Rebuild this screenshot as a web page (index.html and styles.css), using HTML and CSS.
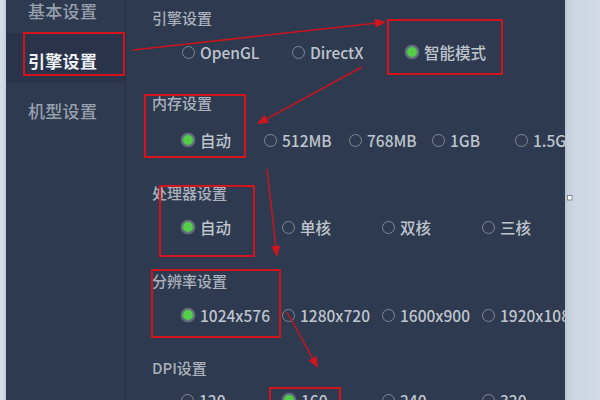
FILE: index.html
```html
<!DOCTYPE html>
<html lang="zh-CN">
<head>
<meta charset="utf-8">
<title>引擎设置</title>
<link rel="stylesheet" href="styles.css">
</head>
<body>
<div class="frame">
  <div class="edge-left"></div>
  <nav class="sidebar">
    <ul class="menu">
      <li class="menu-item">基本设置</li>
      <li class="menu-item active">引擎设置</li>
      <li class="menu-item">机型设置</li>
    </ul>
  </nav>
  <main class="panel">
    <section class="sec sec-engine">
      <div class="sec-title">引擎设置</div>
      <div class="row row-engine">
        <label class="opt w110"><span class="radio"></span>OpenGL</label>
        <label class="opt w113"><span class="radio"></span>DirectX</label>
        <label class="opt"><span class="radio on"></span>智能模式</label>
      </div>
    </section>
    <section class="sec sec-mem">
      <div class="sec-title">内存设置</div>
      <div class="row">
        <label class="opt w83"><span class="radio on"></span>自动</label>
        <label class="opt w85"><span class="radio"></span>512MB</label>
        <label class="opt w83"><span class="radio"></span>768MB</label>
        <label class="opt w83"><span class="radio"></span>1GB</label>
        <label class="opt"><span class="radio"></span>1.5GB</label>
      </div>
    </section>
    <section class="sec sec-cpu">
      <div class="sec-title">处理器设置</div>
      <div class="row">
        <label class="opt w101"><span class="radio on"></span>自动</label>
        <label class="opt w100"><span class="radio"></span>单核</label>
        <label class="opt w100"><span class="radio"></span>双核</label>
        <label class="opt"><span class="radio"></span>三核</label>
      </div>
    </section>
    <section class="sec sec-res">
      <div class="sec-title">分辨率设置</div>
      <div class="row">
        <label class="opt w101"><span class="radio on"></span>1024x576</label>
        <label class="opt w100"><span class="radio"></span>1280x720</label>
        <label class="opt w100"><span class="radio"></span>1600x900</label>
        <label class="opt"><span class="radio"></span>1920x1080</label>
      </div>
    </section>
    <section class="sec sec-dpi">
      <div class="sec-title">DPI设置</div>
      <div class="row">
        <label class="opt w101"><span class="radio"></span>120</label>
        <label class="opt w100"><span class="radio on"></span>160</label>
        <label class="opt w100"><span class="radio"></span>240</label>
        <label class="opt"><span class="radio"></span>320</label>
      </div>
    </section>
  </main>
  <div class="edge-right"></div>

  <svg class="annot" width="600" height="400" viewBox="0 0 600 400" xmlns="http://www.w3.org/2000/svg">
    <g fill="none" stroke="#d3141c" stroke-width="2">
      <rect x="24" y="33" width="100" height="42"/>
      <rect x="388" y="20" width="114" height="54"/>
      <rect x="145" y="95" width="100" height="62"/>
      <rect x="160" y="186" width="94" height="70"/>
      <rect x="152" y="270" width="128" height="67"/>
      <rect x="270" y="388" width="70" height="24"/>
    </g>
    <g stroke="#c8141c" stroke-width="1.5" fill="none">
      <line x1="133" y1="50" x2="375" y2="23.2"/>
      <line x1="362" y1="67" x2="266.7" y2="118.8"/>
      <line x1="267" y1="169" x2="275.8" y2="246"/>
      <line x1="287" y1="312" x2="312.7" y2="358.4"/>
    </g>
    <g fill="#d3141c">
      <polygon points="386,22 375.6,27.7 374.6,18.7"/>
      <polygon points="257,124 268.8,122.7 264.5,114.8"/>
      <polygon points="277,257 280.2,245.6 271.3,246.6"/>
      <polygon points="318,368 316.6,356.2 308.7,360.5"/>
    </g>
    <rect x="567.5" y="195.5" width="4.5" height="4.5" fill="#ffffff" stroke="#6f7780" stroke-width="0.8"/>
  </svg>
</div>
</body>
</html>
```

FILE: styles.css
```css
* { box-sizing: border-box; }

html, body {
  margin: 0;
  padding: 0;
  width: 600px;
  height: 400px;
  overflow: hidden;
  background: #2e3a4f;
  font-family: "Noto Sans CJK SC", "Noto Sans", sans-serif;
}

.frame {
  position: relative;
  display: flex;
  width: 600px;
  height: 400px;
  overflow: hidden;
}

.edge-left {
  width: 6px;
  flex: none;
  background: linear-gradient(to right, #d6dfea 0, #cbd5e3 80%, #b9c4d3 100%);
}

.sidebar {
  width: 120px;
  flex: none;
  background: #2e3a4f;
  border-right: 1px solid #252f40;
  overflow: hidden;
}

.menu {
  list-style: none;
  margin: -17px 0 0 0;
  padding: 0;
}

.menu-item {
  height: 50px;
  padding: 4px 0 0 22px;
  display: flex;
  align-items: center;
  font-size: 17px;
  font-weight: 500;
  color: #97a0ad;
  letter-spacing: 0.3px;
}

.menu-item.active {
  background: #29344a;
  color: #eef1f5;
  font-weight: bold;
}

.panel {
  width: 439px;
  flex: none;
  padding: 8px 0 0 26px;
  overflow: hidden;
  white-space: nowrap;
  background: #2e3a4f;
}

.sec { margin-top: 33px; }
.sec-engine { margin-top: 0; }
.sec-mem { margin-top: 31px; }
.sec-res { margin-top: 34px; }

.sec-title {
  height: 20px;
  line-height: 20px;
  font-size: 15px;
  font-weight: 500;
  color: #aab1bc;
}

.row {
  display: flex;
  align-items: center;
  height: 20px;
  margin-top: 14px;
  padding-left: 29px;
}

.row-engine { padding-left: 30px; }
.sec-mem .row { margin-top: 17px; }
.sec-dpi .row { margin-top: 12px; }

.opt {
  display: flex;
  align-items: center;
  flex: none;
  gap: 5px;
  font-size: 15.5px;
  font-weight: 500;
  line-height: 20px;
  color: #bfc5ce;
}

.w83 { width: 83px; }
.w85 { width: 85px; }
.w100 { width: 100px; }
.w101 { width: 101px; }
.w110 { width: 110px; }
.w113 { width: 113px; }

.radio {
  width: 13px;
  height: 13px;
  flex: none;
  border-radius: 50%;
  border: 1.3px solid #7f8997;
  background: transparent;
}

.radio.on {
  width: 14px;
  height: 14px;
  border: 2px solid #65707f;
  background: #52cf46;
  box-shadow: 0 0 1px #7c8796;
}

.edge-right {
  flex: 1;
  background: linear-gradient(to right, #b7c3d2 0, #c6d1df 3px, #cdd7e4 10px, #d1dae6 100%);
}

.annot {
  position: absolute;
  left: 0;
  top: 0;
  pointer-events: none;
}
```
